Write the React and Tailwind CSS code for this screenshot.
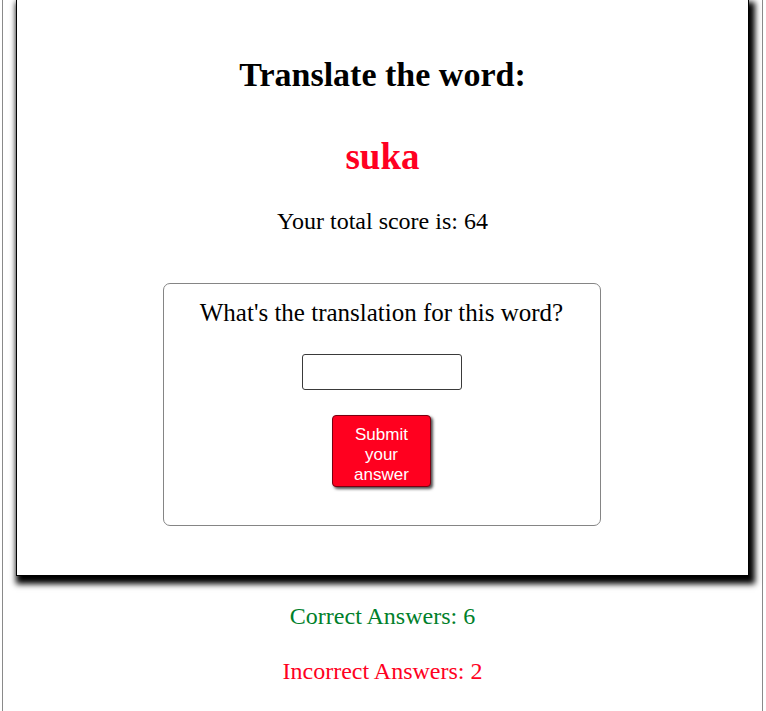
export default function App() {
  const serif = { fontFamily: '"Liberation Serif", "DejaVu Serif", serif' }

  return (
    <div className="h-[711px] overflow-hidden bg-white" style={serif}>
      <div className="ml-[2px] w-[761px] min-h-[711px] border-x border-[#8a8a8a]">
        <div className="mx-[13px] border-x border-b border-black bg-white pt-[55px] pb-[49px] flex flex-col items-center shadow-[3px_5px_6px_3px_black]">
          <h1 className="text-[34px] leading-[40px] font-bold text-black">Translate the word:</h1>
          <div className="mt-[40px] text-[37px] leading-[44px] font-bold text-[#ff0022]">suka</div>
          <div className="mt-[27px] text-[24px] leading-[30px] text-black">Your total score is: 64</div>

          <div className="mt-[47px] -ml-[2px] w-[438px] border border-[#858585] rounded-[7px] pt-[14px] pb-[38px] flex flex-col items-center">
            <div className="text-[25px] leading-[30px] text-black">What's the translation for this word?</div>
            <input
              type="text"
              className="mt-[26px] w-[160px] h-[36px] border border-[#3a3a3a] rounded-[3px] bg-white px-2 outline-none"
            />
            <button
              className="mt-[25px] w-[99px] h-[72px] px-[12px] pt-[8px] bg-[#ff001f] text-white rounded-[4px] border border-[#7a0010] text-[17px] leading-[20px] shadow-[2px_2px_3px_rgba(0,0,0,0.7)]"
              style={{ fontFamily: '"Liberation Sans", Arial, sans-serif' }}
            >
              Submit your answer
            </button>
          </div>
        </div>

        <div className="flex flex-col items-center">
          <div className="mt-[25px] text-[24px] leading-[30px] text-[#00802b]">Correct Answers: 6</div>
          <div className="mt-[25px] text-[24px] leading-[30px] text-[#ff0022]">Incorrect Answers: 2</div>
        </div>
      </div>
    </div>
  )
}
